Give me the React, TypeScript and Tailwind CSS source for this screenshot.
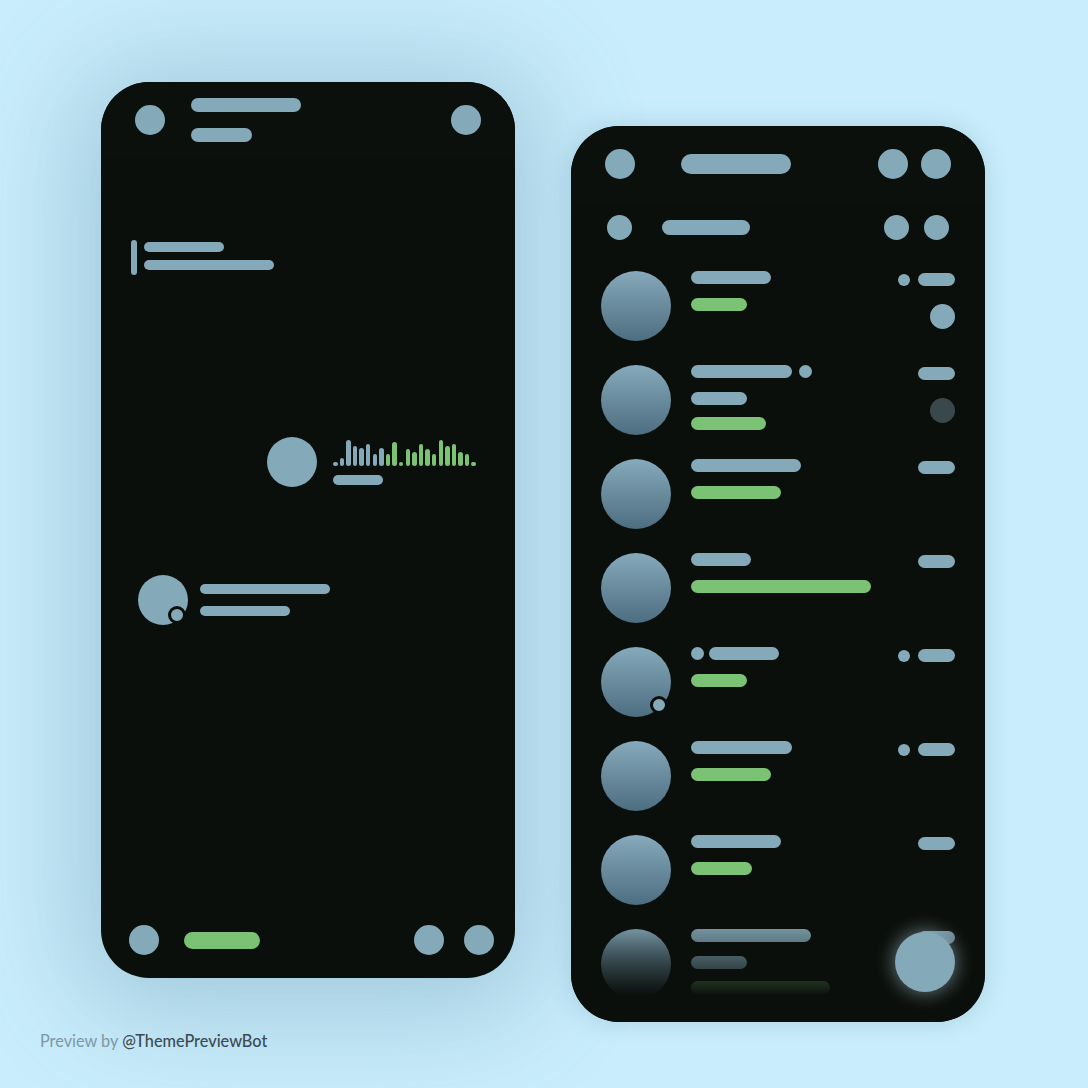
import React from 'react'

const wave = [4, 8, 26, 20, 18, 22, 12, 18, 12, 24, 4, 17, 14, 22, 17, 12, 26, 20, 22, 14, 12, 4]

type Chat = {
  top: number
  topDot?: 'before' | 'after'
  sub?: boolean
  green: number
  dot?: boolean
  extra?: 'light' | 'dark'
  badge?: boolean
}

const chats: Chat[] = [
  { top: 80, green: 56, dot: true, extra: 'light' },
  { top: 101, topDot: 'after', sub: true, green: 75, extra: 'dark' },
  { top: 110, green: 90 },
  { top: 60, green: 180 },
  { top: 70, topDot: 'before', green: 56, dot: true, badge: true },
  { top: 101, green: 80, dot: true },
  { top: 90, green: 61 },
  { top: 120, sub: true, green: 139 },
]

function Dot({ size }: { size: string }) {
  return <div className={`${size} shrink-0 rounded-full bg-[#84a9b9]`} />
}

function ChatRow({ chat }: { chat: Chat }) {
  return (
    <div className="flex h-[94px] shrink-0 px-[30px] py-[12px]">
      {/* Avatar */}
      <div className="relative h-[70px] w-[70px] shrink-0 rounded-full bg-linear-to-b from-[#86aabb] to-[#4d6e80]">
        {chat.badge && (
          <div className="absolute right-[3px] bottom-[3px] h-[18px] w-[18px] rounded-full border-[3px] border-[#0b0f0b] bg-[#84a9b9]" />
        )}
      </div>

      {/* Lines */}
      <div className="ml-[20px] flex flex-col">
        <div className="flex items-center">
          {chat.topDot === 'before' && <div className="mr-[5px] h-[13px] w-[13px] rounded-full bg-[#84a9b9]" />}
          <div className="h-[13px] rounded-full bg-[#84a9b9]" style={{ width: chat.top }} />
          {chat.topDot === 'after' && <div className="ml-[7px] h-[13px] w-[13px] rounded-full bg-[#84a9b9]" />}
        </div>
        {chat.sub && <div className="mt-[14px] h-[13px] w-[56px] rounded-full bg-[#84a9b9]" />}
        <div
          className={`${chat.sub ? 'mt-[12px]' : 'mt-[14px]'} h-[13px] rounded-full bg-[#7bc274]`}
          style={{ width: chat.green }}
        />
      </div>

      {/* Meta */}
      <div className="ml-auto flex flex-col items-end">
        <div className="mt-[2px] flex items-center gap-[8px]">
          {chat.dot && <Dot size="h-[12px] w-[12px]" />}
          <div className="h-[13px] w-[37px] rounded-full bg-[#84a9b9]" />
        </div>
        {chat.extra === 'light' && <div className="mt-[18px] h-[25px] w-[25px] rounded-full bg-[#84a9b9]" />}
        {chat.extra === 'dark' && <div className="mt-[18px] h-[25px] w-[25px] rounded-full bg-[#3a484c]" />}
      </div>
    </div>
  )
}

function ChatScreen() {
  return (
    <div className="flex h-[896px] w-[414px] flex-col overflow-hidden rounded-[48px] bg-[#0b0f0b] shadow-[0_10px_110px_25px_rgba(70,120,145,0.3)]">
      {/* Header */}
      <div className="flex h-[76px] shrink-0 items-center bg-[#0c100c] px-[34px]">
        <Dot size="h-[30px] w-[30px]" />
        <div className="ml-[26px] flex flex-col gap-[16px]">
          <div className="h-[14px] w-[110px] rounded-full bg-[#84a9b9]" />
          <div className="h-[14px] w-[61px] rounded-full bg-[#84a9b9]" />
        </div>
        <div className="ml-auto">
          <Dot size="h-[30px] w-[30px]" />
        </div>
      </div>

      {/* Pinned quote */}
      <div className="mt-[82px] ml-[30px] flex gap-[7px]">
        <div className="h-[35px] w-[6px] rounded-full bg-[#84a9b9]" />
        <div className="flex flex-col gap-[8px] pt-[2px]">
          <div className="h-[10px] w-[80px] rounded-full bg-[#84a9b9]" />
          <div className="h-[10px] w-[130px] rounded-full bg-[#84a9b9]" />
        </div>
      </div>

      {/* Voice message */}
      <div className="mt-[162px] ml-[166px] flex items-center gap-[16px]">
        <Dot size="h-[50px] w-[50px]" />
        <div className="flex flex-col">
          <div className="flex h-[26px] items-end gap-[2.1px]">
            {wave.map((h, i) => (
              <div
                key={i}
                className={`w-[4.5px] rounded-full ${i < 8 ? 'bg-[#84a9b9]' : 'bg-[#7bc274]'}`}
                style={{ height: h }}
              />
            ))}
          </div>
          <div className="mt-[9px] h-[10px] w-[50px] rounded-full bg-[#84a9b9]" />
        </div>
      </div>

      {/* Incoming message */}
      <div className="mt-[88px] ml-[37px] flex items-center gap-[12px]">
        <div className="relative h-[50px] w-[50px] rounded-full bg-[#84a9b9]">
          <div className="absolute right-[2px] bottom-[1px] h-[18px] w-[18px] rounded-full border-[3px] border-[#0b0f0b] bg-[#84a9b9]" />
        </div>
        <div className="flex flex-col gap-[12px]">
          <div className="h-[10px] w-[130px] rounded-full bg-[#84a9b9]" />
          <div className="h-[10px] w-[90px] rounded-full bg-[#84a9b9]" />
        </div>
      </div>

      {/* Composer */}
      <div className="mt-auto flex h-[76px] items-center pr-[21px] pl-[28px]">
        <Dot size="h-[30px] w-[30px]" />
        <div className="ml-[25px] h-[17px] w-[76px] rounded-full bg-[#7bc274]" />
        <div className="ml-auto flex gap-[20px]">
          <Dot size="h-[30px] w-[30px]" />
          <Dot size="h-[30px] w-[30px]" />
        </div>
      </div>
    </div>
  )
}

function ListScreen() {
  return (
    <div className="relative mt-[44px] flex h-[896px] w-[414px] flex-col overflow-hidden rounded-[48px] bg-[#0b0f0b] shadow-[0_0_22px_2px_rgba(80,130,155,0.22)]">
      {/* Toolbar */}
      <div className="flex h-[76px] shrink-0 items-center bg-[#0c100c] px-[34px]">
        <Dot size="h-[30px] w-[30px]" />
        <div className="ml-[46px] h-[20px] w-[110px] rounded-full bg-[#84a9b9]" />
        <div className="ml-auto flex gap-[13px]">
          <Dot size="h-[30px] w-[30px]" />
          <Dot size="h-[30px] w-[30px]" />
        </div>
      </div>

      {/* Tabs row */}
      <div className="flex h-[50px] shrink-0 items-center px-[36px]">
        <Dot size="h-[25px] w-[25px]" />
        <div className="ml-[30px] h-[15px] w-[88px] rounded-full bg-[#84a9b9]" />
        <div className="ml-auto flex gap-[15px]">
          <Dot size="h-[25px] w-[25px]" />
          <Dot size="h-[25px] w-[25px]" />
        </div>
      </div>

      {/* Chats */}
      <div className="flex flex-col pt-[7px]">
        {chats.map((c, i) => (
          <ChatRow key={i} chat={c} />
        ))}
      </div>

      {/* Bottom fade */}
      <div className="absolute inset-x-0 bottom-0 h-[104px] bg-linear-to-b from-transparent to-[#0b0f0b] to-75%" />

      {/* FAB */}
      <div className="absolute right-[30px] bottom-[30px] h-[60px] w-[60px] rounded-full bg-[#84a9b9] shadow-[0_0_18px_2px_rgba(190,225,240,0.45)]" />
    </div>
  )
}

export default function App() {
  return (
    <div className="relative h-[1088px] w-[1088px] overflow-hidden bg-[#c9edfc] font-['Lato',sans-serif]">
      <div className="flex items-start gap-[56px] pt-[82px] pl-[101px]">
        <ChatScreen />
        <ListScreen />
      </div>
      <div className="mt-[9px] pl-[40px] text-[16.3px] leading-[20px]">
        <span className="text-[#7d98a5]">Preview by </span>
        <span className="font-medium text-[#3b4a52]">@ThemePreviewBot</span>
      </div>
    </div>
  )
}
